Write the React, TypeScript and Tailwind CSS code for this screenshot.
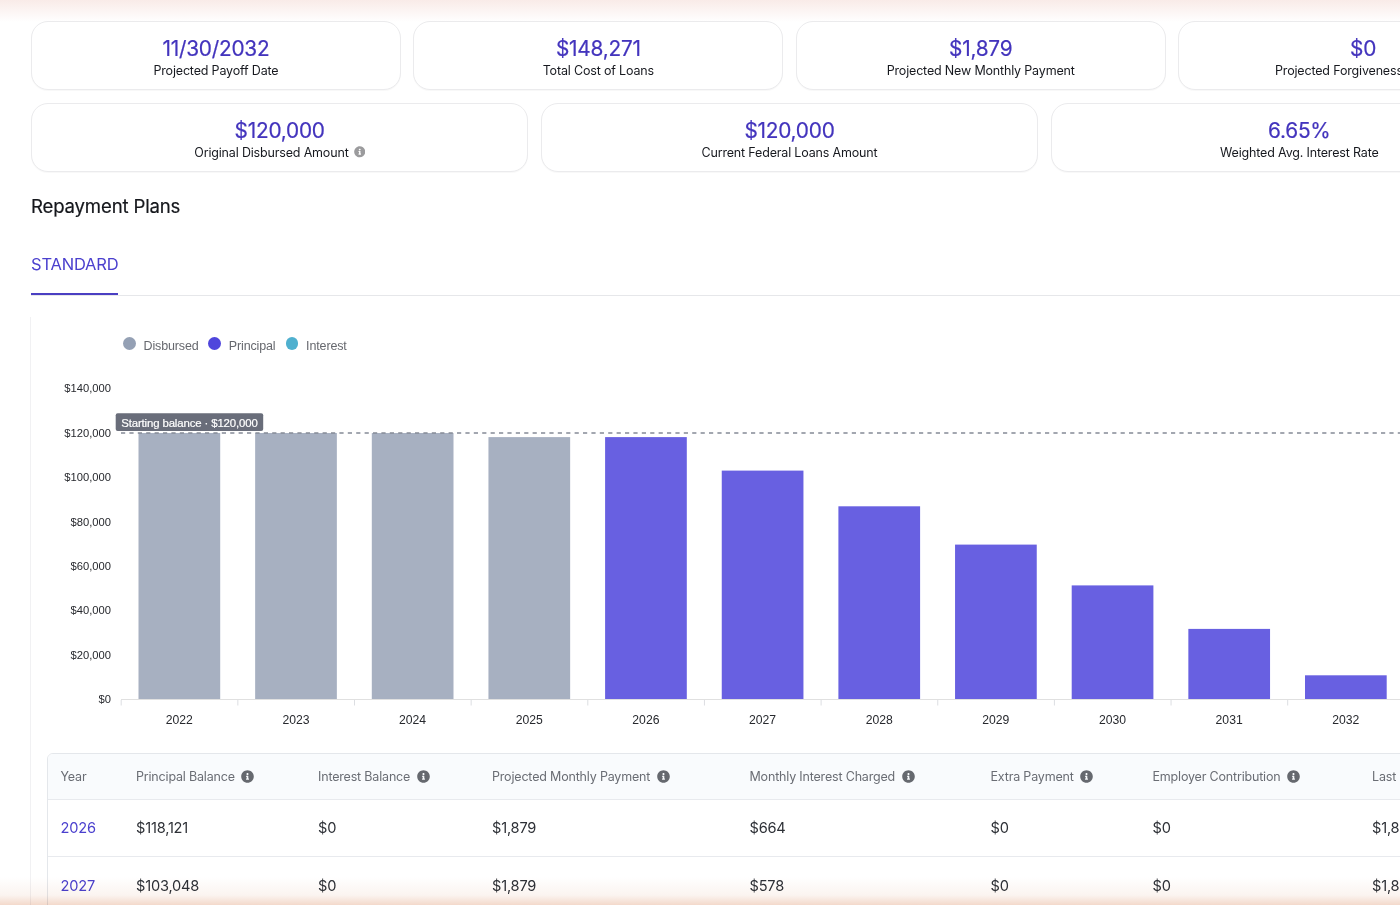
import { FaInfoCircle } from "react-icons/fa";

type Stat = { value: string; label: string; info?: boolean };

const topStats: Stat[] = [
  { value: "11/30/2032", label: "Projected Payoff Date" },
  { value: "$148,271", label: "Total Cost of Loans" },
  { value: "$1,879", label: "Projected New Monthly Payment" },
  { value: "$0", label: "Projected Forgiveness Amount" },
];

const loanStats: Stat[] = [
  { value: "$120,000", label: "Original Disbursed Amount", info: true },
  { value: "$120,000", label: "Current Federal Loans Amount" },
  { value: "6.65%", label: "Weighted Avg. Interest Rate" },
];

const legend = [
  { label: "Disbursed", dot: "bg-[#94a0b4]", width: "w-[85.3px]" },
  { label: "Principal", dot: "bg-[#4f46dc]", width: "w-[77.3px]" },
  { label: "Interest", dot: "bg-[#4fb0cf]", width: "w-[80px]" },
];

const bars = [
  { year: 2022, top: 433 },
  { year: 2023, top: 433 },
  { year: 2024, top: 433 },
  { year: 2025, top: 437.1 },
  { year: 2026, top: 437.1 },
  { year: 2027, top: 470.6 },
  { year: 2028, top: 506.3 },
  { year: 2029, top: 544.6 },
  { year: 2030, top: 585.4 },
  { year: 2031, top: 628.9 },
  { year: 2032, top: 675.3 },
];

const axisLabels = ["$140,000", "$120,000", "$100,000", "$80,000", "$60,000", "$40,000", "$20,000", "$0"];

const columns = [
  { label: "Year", info: false },
  { label: "Principal Balance", info: true },
  { label: "Interest Balance", info: true },
  { label: "Projected Monthly Payment", info: true },
  { label: "Monthly Interest Charged", info: true },
  { label: "Extra Payment", info: true },
  { label: "Employer Contribution", info: true },
  { label: "Last Payment", info: false },
];

const rows = [
  ["2026", "$118,121", "$0", "$1,879", "$664", "$0", "$0", "$1,879"],
  ["2027", "$103,048", "$0", "$1,879", "$578", "$0", "$0", "$1,879"],
];

const gridCols =
  "grid grid-cols-[75.5px_182px_174px_257.5px_241px_162px_219.5px_176px] pl-[12.5px]";

function StatCard({ value, label, info }: Stat) {
  return (
    <div className="flex h-[69px] flex-1 flex-col items-center rounded-[17px] border border-[#ebebed] bg-white pt-[13px] shadow-[0_1px_1px_rgba(0,0,0,0.03)]">
      <div className="text-[20.8px] leading-[28px] tracking-[-0.22px] text-[#4334bd] [-webkit-text-stroke:0.2px_#4334bd]">
        {value}
      </div>
      <div className="-mt-px flex items-center gap-[5px] text-[12.5px] leading-[17px] tracking-[-0.17px] text-[#17191f]">
        {label}
        {info && <FaInfoCircle className="size-[11.5px] text-[#9b9b9d]" />}
      </div>
    </div>
  );
}

const PITCH = 116.65;
const X0 = 121;
const BASE = 699;

function BalanceChart() {
  return (
    <svg
      width="1484"
      height="370"
      viewBox="31 370 1484 370"
      className="block font-['Liberation_Sans',Arial,sans-serif]"
    >
      {axisLabels.map((label, i) => (
        <text key={label} x="111" y={392.4 + i * 44.4} textAnchor="end" fontSize="11.2" fill="#27292e">
          {label}
        </text>
      ))}
      <line x1={X0} x2="1515" y1="699.5" y2="699.5" stroke="#e0e0e0" />
      {bars.map((bar, i) => (
        <g key={bar.year}>
          <line x1={X0 + 0.2 + i * PITCH} x2={X0 + 0.2 + i * PITCH} y1="700" y2="705.5" stroke="#dcdee2" />
          <rect
            x={138.5 + i * PITCH}
            y={bar.top}
            width="81.7"
            height={BASE - bar.top}
            fill={i < 4 ? "#a7b0c1" : "#6860e1"}
          />
          <text x={179.3 + i * PITCH} y="724" textAnchor="middle" fontSize="12.2" fill="#27292e">
            {bar.year}
          </text>
        </g>
      ))}
      <line x1={X0} x2="1515" y1="433" y2="433" stroke="#858b96" strokeWidth="1.3" strokeDasharray="4.2 4.2" />
      <rect x="115.7" y="413.2" width="147.5" height="17.8" rx="2" fill="#696d7a" />
      <text
        x="121.2"
        y="427"
        fontSize="11.4"
        textLength="136.6"
        fill="#fff"
        stroke="#fff"
        strokeWidth="0.2"
      >
        Starting balance · $120,000
      </text>
    </svg>
  );
}

export default function App() {
  return (
    <div className="relative h-[905px] w-[1400px] overflow-hidden bg-white font-['Inter',sans-serif]">
      <div className="w-[1548px] pl-[31px] pt-[21px]">
        <div className="flex gap-[12.5px]">
          {topStats.map((s) => (
            <StatCard key={s.label} {...s} />
          ))}
        </div>
        <div className="mt-[12.5px] flex gap-[12.5px]">
          {loanStats.map((s) => (
            <StatCard key={s.label} {...s} />
          ))}
        </div>

        <h2 className="mt-[20.5px] text-[18.6px] leading-[28px] tracking-[-0.17px] text-[#15171c] [-webkit-text-stroke:0.2px_#15171c]">
          Repayment Plans
        </h2>

        <div className="mt-[22px] flex h-[54px] border-b border-[#e6e7ea]">
          <button className="h-[53px] border-b-2 border-[#4a3fc2] pb-[7.5px] text-[16.5px] leading-[20px] tracking-[-0.18px] text-[#4b40ce]">
            STANDARD
          </button>
        </div>

        <section className="-ml-px mt-[20.5px] h-[700px] border-l border-[#f1f1f3]">
          <div className="flex h-[53px] items-start pl-[92px] pt-[17.5px]">
            {legend.map((item) => (
              <div key={item.label} className={`flex ${item.width}`}>
                <span className={`mt-[3px] size-[12.5px] shrink-0 rounded-full ${item.dot}`} />
                <span className="ml-[8px] mt-[3px] font-['Liberation_Sans',Arial,sans-serif] text-[12.5px] leading-[18px] tracking-[-0.14px] text-[#66686e]">
                  {item.label}
                </span>
              </div>
            ))}
          </div>
          <BalanceChart />

          <div className="ml-[16px] mt-[13px] h-[300px] w-[1500px] overflow-hidden rounded-t-[6px] border border-[#e4e7eb]">
            <div className={`${gridCols} h-[46px] items-center border-b border-[#e8eaee] bg-[#f9fbfd] pt-px text-[12.5px] tracking-[-0.18px] text-[#6a6d74]`}>
              {columns.map((c) => (
                <div key={c.label} className="flex items-center gap-[6.5px] whitespace-nowrap">
                  <span className="pt-px">{c.label}</span>
                  {c.info && <FaInfoCircle className="size-[13px] text-[#66696f]" />}
                </div>
              ))}
            </div>
            {rows.map((row) => (
              <div key={row[0]} className={`${gridCols} h-[57.7px] items-center border-b border-[#e8eaee] pt-[3px] text-[14.6px] tracking-[-0.2px] text-[#2d3036]`}>
                {row.map((cell, i) => (
                  <div key={i} className={i === 0 ? "text-[#4b40ce]" : ""}>
                    {cell}
                  </div>
                ))}
              </div>
            ))}
          </div>
        </section>
      </div>

      <div className="pointer-events-none absolute inset-x-0 top-0 h-[22px] bg-linear-to-b from-[#f9ebe8] to-white mix-blend-multiply" />
      <div className="pointer-events-none absolute inset-x-0 bottom-0 h-[28px] bg-linear-to-t from-[#f3d9cb] via-[#fbf4f0] via-35% to-white mix-blend-multiply" />
    </div>
  );
}
